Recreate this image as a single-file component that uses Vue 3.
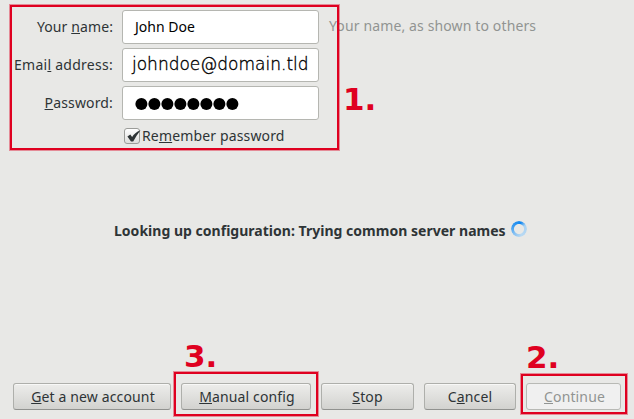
<script setup>
const fields = [
  { id: 'name', before: 'Your ', key: 'n', after: 'ame:', value: 'John Doe' },
  { id: 'email', before: 'Emai', key: 'l', after: ' address:', value: 'johndoe@domain.tld' },
  { id: 'password', before: '', key: 'P', after: 'assword:', value: '' }
]
const buttons = [
  { id: 'account', before: '', key: 'G', after: 'et a new account' },
  { id: 'manual', before: '', key: 'M', after: 'anual config' },
  { id: 'stop', before: '', key: 'S', after: 'top' },
  { id: 'cancel', before: 'C', key: 'a', after: 'ncel' },
  { id: 'continue', before: '', key: 'C', after: 'ontinue', disabled: true }
]
</script>

<template>
  <main class="dialog">
    <section class="form">
      <div v-for="f in fields" :key="f.id" class="row">
        <label class="label"><span :class="'t-' + f.id">{{ f.before }}<u>{{ f.key }}</u>{{ f.after }}</span></label>
        <div class="input" :class="f.id">
          <svg v-if="f.id === 'password'" width="106" height="14" viewBox="0 0 106 14">
            <circle v-for="n in 8" :key="n" :cx="n * 13 - 6.6" cy="7" r="6" />
          </svg>
          <span v-else>{{ f.value }}</span>
        </div>
        <span v-if="f.id === 'name'" class="hint">Your name, as shown to others</span>
      </div>
      <div class="remember">
        <span class="check">
          <svg width="16" height="16" viewBox="0 0 16 16"><path d="M2.4 7.4 5.3 5.6 7.1 7.9C8.8 5.2 11.4 3 15.5 1.3 12.7 4.8 10.3 8.6 8.2 12.6H6Z" /></svg>
        </span>
        <span class="remember-text">Re<u>m</u>ember password</span>
      </div>
    </section>
    <section class="status">
      <strong>Looking up configuration: Trying common server names</strong>
      <span class="spinner"></span>
    </section>
    <footer class="buttons">
      <button v-for="b in buttons" :key="b.id" :class="b.id" :disabled="b.disabled"><span>{{ b.before }}<u>{{ b.key }}</u>{{ b.after }}</span></button>
    </footer>
    <div class="frame one"></div>
    <div class="frame two"></div>
    <div class="frame three"></div>
    <span class="number n-one">1.</span>
    <span class="number n-two">2.</span>
    <span class="number n-three">3.</span>
  </main>
</template>

<style>
body { background: #e8e8e6; }
</style>
<style scoped>
* { box-sizing: border-box; }
.dialog {
  position: relative;
  width: 634px;
  height: 419px;
  overflow: hidden;
  display: flex;
  flex-direction: column;
  background: #e8e8e6;
  color: #2e3436;
  font: 14px/20px "Noto Sans", "Open Sans", sans-serif;
  white-space: nowrap;
}
u { text-decoration: underline; text-decoration-thickness: 1px; text-underline-offset: 1px; text-decoration-skip-ink: none; }
.form { height: 210px; padding-top: 10px; display: flex; flex-direction: column; gap: 4px; }
.row { display: flex; align-items: center; height: 34px; }
.label { width: 122px; padding-right: 9px; display: flex; justify-content: flex-end; }
.t-name { letter-spacing: .1px; }
.t-email { letter-spacing: .27px; }
.t-password { letter-spacing: .15px; }
.input {
  width: 197px;
  height: 34px;
  display: flex;
  align-items: center;
  padding-left: 12px;
  border: 1px solid #b5b6b1;
  border-radius: 3px;
  background: #fff;
  color: #000;
}
.input.email { padding: 0 0 2px 9px; font: 200 17px/22px "DejaVu Sans", "DejaVu Sans Light", sans-serif; -webkit-text-stroke: .35px #000; }
.input.password { padding-top: 2px; }
.hint { margin-left: 10px; padding-bottom: 2px; color: #919492; letter-spacing: .13px; }
.remember { display: flex; align-items: center; height: 24px; padding-left: 124px; }
.remember-text { letter-spacing: .15px; }
.check {
  width: 16px;
  height: 16px;
  margin-right: 2px;
  border: 1px solid #9b9c99;
  border-radius: 3px;
  background: linear-gradient(#fff, #dededc);
}
.check svg { display: block; margin: 0; fill: #2e3436; }
.status { height: 42px; display: flex; align-items: center; padding-left: 114px; }
.status strong { letter-spacing: .02px; }
.spinner {
  width: 16px;
  height: 16px;
  margin: -4px 0 0 5px;
  border-radius: 50%;
  background: conic-gradient(from 20deg, #1f8ef0 0deg, #a9d2f3 40deg, #b9d9f2 140deg, #83bff2 210deg, #3e9df0 270deg, #0c85ef 360deg);
  mask: radial-gradient(circle, transparent 4.6px, #000 5.4px);
}
.buttons { display: flex; gap: 10px; padding: 131px 0 0 13px; }
button {
  height: 27px;
  padding: 0;
  border: 1px solid #aeafab;
  border-bottom-color: #91928f;
  border-radius: 3px;
  background: linear-gradient(#ededeb, #d2d2cf);
  box-shadow: inset 0 1px #f8f8f7;
  color: #2e3436;
  font: inherit;
  letter-spacing: .14px;
}
.account { width: 158px; padding-left: 2px; }
.manual { width: 130px; padding-left: 2px; }
.stop { width: 93px; }
.cancel { width: 92px; }
.continue { width: 95px; padding-left: 2px; background: #f0f0f0; color: #919492; border-color: #b8b9b5; box-shadow: none; }
.frame { position: absolute; border: 2px solid #df0020; box-shadow: 0 0 0 1px rgba(223, 0, 32, .4); }
.one { left: 10px; top: 5px; width: 329px; height: 145px; }
.two { left: 521px; top: 374px; width: 106px; height: 40px; }
.three { left: 174px; top: 372px; width: 144px; height: 44px; }
.number { position: absolute; font: bold 31px/36px "DejaVu Sans", sans-serif; color: #df0020; }
.n-one { left: 343px; top: 81px; }
.n-two { left: 526px; top: 339px; }
.n-three { left: 184px; top: 338px; }
</style>
